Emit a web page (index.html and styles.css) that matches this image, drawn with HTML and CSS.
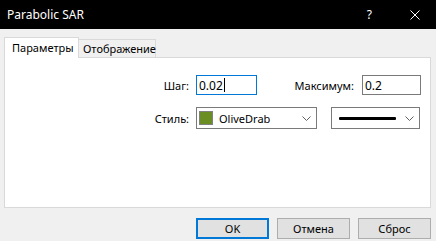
FILE: index.html
```html
<!DOCTYPE html>
<html>
<head>
<meta charset="utf-8">
<link rel="stylesheet" href="styles.css">
</head>
<body>
<div class="window">
  <div class="titlebar">
    <span class="title">Parabolic SAR</span>
    <span class="help">?</span>
    <svg class="close" width="10" height="10" viewBox="0 0 10 10"><path d="M0.5 0.5 L9.5 9.5 M9.5 0.5 L0.5 9.5" stroke="#fff" stroke-width="1"/></svg>
  </div>
  <div class="tabs">
    <div class="tab active">Параметры</div>
    <div class="tab">Отображение</div>
  </div>
  <div class="panel">
    <div class="row row1">
      <label class="lbl lbl-main">Шаг:</label>
      <div class="field field-step focused"><span>0.02</span><span class="caret"></span></div>
      <label class="lbl lbl-max">Максимум:</label>
      <div class="field field-max"><span>0.2</span></div>
    </div>
    <div class="row row2">
      <label class="lbl lbl-main">Стиль:</label>
      <div class="combo combo-color">
        <span class="swatch"></span>
        <span class="combo-text">OliveDrab</span>
        <svg class="chev" width="9" height="5" viewBox="0 0 9 5"><path d="M0.5 0.5 L4.5 4.5 L8.5 0.5" fill="none" stroke="#606060" stroke-width="1"/></svg>
      </div>
      <div class="combo combo-line">
        <span class="line"></span>
        <svg class="chev" width="9" height="5" viewBox="0 0 9 5"><path d="M0.5 0.5 L4.5 4.5 L8.5 0.5" fill="none" stroke="#606060" stroke-width="1"/></svg>
      </div>
    </div>
  </div>
  <div class="buttons">
    <button class="btn default">OK</button>
    <button class="btn">Отмена</button>
    <button class="btn">Сброс</button>
  </div>
</div>
</body>
</html>
```
FILE: styles.css
```css
html, body {
  margin: 0;
  padding: 0;
  background: #f0f0f0;
}
body {
  width: 436px;
  height: 241px;
  overflow: hidden;
  font-family: "Noto Sans", "Open Sans", sans-serif;
  font-size: 11px;
  color: #000;
}
.window {
  display: flex;
  flex-direction: column;
  height: 241px;
}
.titlebar {
  height: 29px;
  background: #000;
  color: #fff;
  display: flex;
  align-items: center;
  padding-left: 7px;
}
.title {
  flex: 1;
  font-size: 12px;
}
.help {
  font-size: 12px;
  margin-right: 38px;
}
.close {
  margin-right: 16px;
}
.tabs {
  display: flex;
  align-items: flex-end;
  padding-left: 4px;
  margin-top: 8px;
  height: 20px;
  position: relative;
  z-index: 1;
}
.tab {
  box-sizing: border-box;
  height: 18px;
  border: 1px solid #d9d9d9;
  border-bottom: none;
  background: #f0f0f0;
  line-height: 16px;
  padding: 1px 0 0 4px;
}
.tab.active {
  height: 21px;
  margin-bottom: -1px;
  background: #fff;
  width: 75px;
  padding: 2px 0 0 7px;
}
.tab + .tab {
  margin-left: -1px;
  width: 78px;
}
.panel {
  box-sizing: border-box;
  margin: 0 5px 0 4px;
  height: 151px;
  background: #fff;
  border: 1px solid #d9d9d9;
  padding-top: 17px;
}
.row {
  display: flex;
  align-items: center;
}
.row2 {
  margin-top: 12px;
}
.lbl {
  text-align: right;
  flex: none;
}
.lbl-main {
  width: 184px;
}
.lbl-max {
  width: 97px;
}
.field {
  box-sizing: border-box;
  height: 20px;
  border: 1px solid #7a7a7a;
  display: flex;
  align-items: center;
  padding-left: 2px;
  flex: none;
  font-size: 12px;
}
.field.focused {
  border-color: #0078d7;
}
.field-step {
  width: 61px;
  margin-left: 7px;
}
.field-max {
  width: 59px;
  margin-left: 8px;
}
.caret {
  display: inline-block;
  width: 1px;
  height: 14px;
  background: #000;
  margin-left: 1px;
}
.combo {
  box-sizing: border-box;
  height: 22px;
  border: 1px solid #7a7a7a;
  display: flex;
  align-items: center;
  position: relative;
  flex: none;
}
.combo-color {
  width: 121px;
  margin-left: 7px;
  padding-left: 2px;
}
.combo-line {
  width: 89px;
  margin-left: 14px;
  padding-left: 7px;
}
.swatch {
  box-sizing: border-box;
  width: 14px;
  height: 14px;
  border: 1px solid #808080;
  background: #6b8e23;
  margin-right: 6px;
}
.combo-text {
  flex: 1;
}
.line {
  width: 57px;
  height: 3px;
  background: #000;
  border-radius: 1px;
}
.chev {
  position: absolute;
  right: 5px;
  top: 8px;
}
.buttons {
  display: flex;
  justify-content: flex-end;
  gap: 8px;
  padding-right: 5px;
  margin-top: 10px;
}
.btn {
  box-sizing: border-box;
  width: 73px;
  height: 21px;
  background: #e1e1e1;
  border: 1px solid #adadad;
  font-family: "Noto Sans", "Open Sans", sans-serif;
  font-size: 11px;
  color: #000;
  padding: 0;
  border-radius: 0;
}
.btn.default {
  border: 2px solid #0078d7;
}
```
